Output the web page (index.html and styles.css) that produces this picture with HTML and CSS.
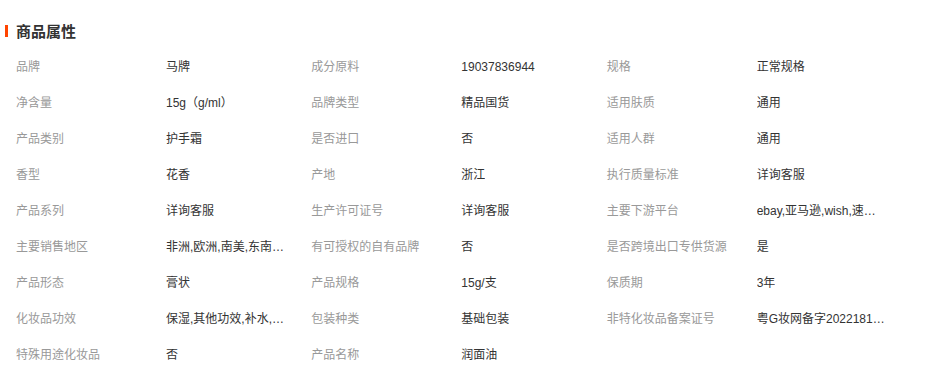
FILE: index.html
```html
<!DOCTYPE html>
<html lang="zh-CN">
<head>
<meta charset="utf-8">
<title>商品属性</title>
<link rel="stylesheet" href="styles.css">
</head>
<body>
<section class="attrs">
  <h2 class="attrs-title">商品属性</h2>
  <ul class="attrs-list">
    <li class="attr"><span class="attr-name">品牌</span><span class="attr-value">马牌</span></li>
    <li class="attr"><span class="attr-name">成分原料</span><span class="attr-value">19037836944</span></li>
    <li class="attr"><span class="attr-name">规格</span><span class="attr-value">正常规格</span></li>
    <li class="attr"><span class="attr-name">净含量</span><span class="attr-value">15g（g/ml）</span></li>
    <li class="attr"><span class="attr-name">品牌类型</span><span class="attr-value">精品国货</span></li>
    <li class="attr"><span class="attr-name">适用肤质</span><span class="attr-value">通用</span></li>
    <li class="attr"><span class="attr-name">产品类别</span><span class="attr-value">护手霜</span></li>
    <li class="attr"><span class="attr-name">是否进口</span><span class="attr-value">否</span></li>
    <li class="attr"><span class="attr-name">适用人群</span><span class="attr-value">通用</span></li>
    <li class="attr"><span class="attr-name">香型</span><span class="attr-value">花香</span></li>
    <li class="attr"><span class="attr-name">产地</span><span class="attr-value">浙江</span></li>
    <li class="attr"><span class="attr-name">执行质量标准</span><span class="attr-value">详询客服</span></li>
    <li class="attr"><span class="attr-name">产品系列</span><span class="attr-value">详询客服</span></li>
    <li class="attr"><span class="attr-name">生产许可证号</span><span class="attr-value">详询客服</span></li>
    <li class="attr"><span class="attr-name">主要下游平台</span><span class="attr-value">ebay,亚马逊,wish,速卖通,独立站</span></li>
    <li class="attr"><span class="attr-name">主要销售地区</span><span class="attr-value">非洲,欧洲,南美,东南亚,北美,中东</span></li>
    <li class="attr"><span class="attr-name">有可授权的自有品牌</span><span class="attr-value">否</span></li>
    <li class="attr"><span class="attr-name">是否跨境出口专供货源</span><span class="attr-value">是</span></li>
    <li class="attr"><span class="attr-name">产品形态</span><span class="attr-value">膏状</span></li>
    <li class="attr"><span class="attr-name">产品规格</span><span class="attr-value">15g/支</span></li>
    <li class="attr"><span class="attr-name">保质期</span><span class="attr-value">3年</span></li>
    <li class="attr"><span class="attr-name">化妆品功效</span><span class="attr-value">保湿,其他功效,补水,滋润</span></li>
    <li class="attr"><span class="attr-name">包装种类</span><span class="attr-value">基础包装</span></li>
    <li class="attr"><span class="attr-name">非特化妆品备案证号</span><span class="attr-value">粤G妆网备字2022181234</span></li>
    <li class="attr"><span class="attr-name">特殊用途化妆品</span><span class="attr-value">否</span></li>
    <li class="attr"><span class="attr-name">产品名称</span><span class="attr-value">润面油</span></li>
  </ul>
</section>
</body>
</html>
```

FILE: styles.css
```css
html, body {
  margin: 0;
  padding: 0;
  background: #fff;
}

body {
  font-family: "Liberation Sans", "Noto Sans CJK SC", sans-serif;
  font-size: 12px;
  color: #333;
}

.attrs {
  padding: 14px 29px 0 5px;
}

.attrs-title {
  display: flex;
  align-items: center;
  gap: 8px;
  margin: 0;
  height: 32px;
  font-size: 15px;
  font-weight: bold;
  color: #333;
}

.attrs-title::before {
  content: "";
  display: block;
  width: 3px;
  height: 12px;
  margin-top: 1px;
  background: #ff4400;
}

.attrs-list {
  display: grid;
  grid-template-columns: repeat(3, 1fr);
  list-style: none;
  margin: 3px 0 0;
  padding: 0 0 0 11px;
}

.attr {
  display: flex;
  height: 36px;
  line-height: 36px;
  min-width: 0;
}

.attr-name {
  flex: 0 0 150px;
  color: #999;
  white-space: nowrap;
}

.attr-value {
  max-width: 129px;
  color: #333;
  white-space: nowrap;
  overflow: hidden;
  text-overflow: ellipsis;
}
```
